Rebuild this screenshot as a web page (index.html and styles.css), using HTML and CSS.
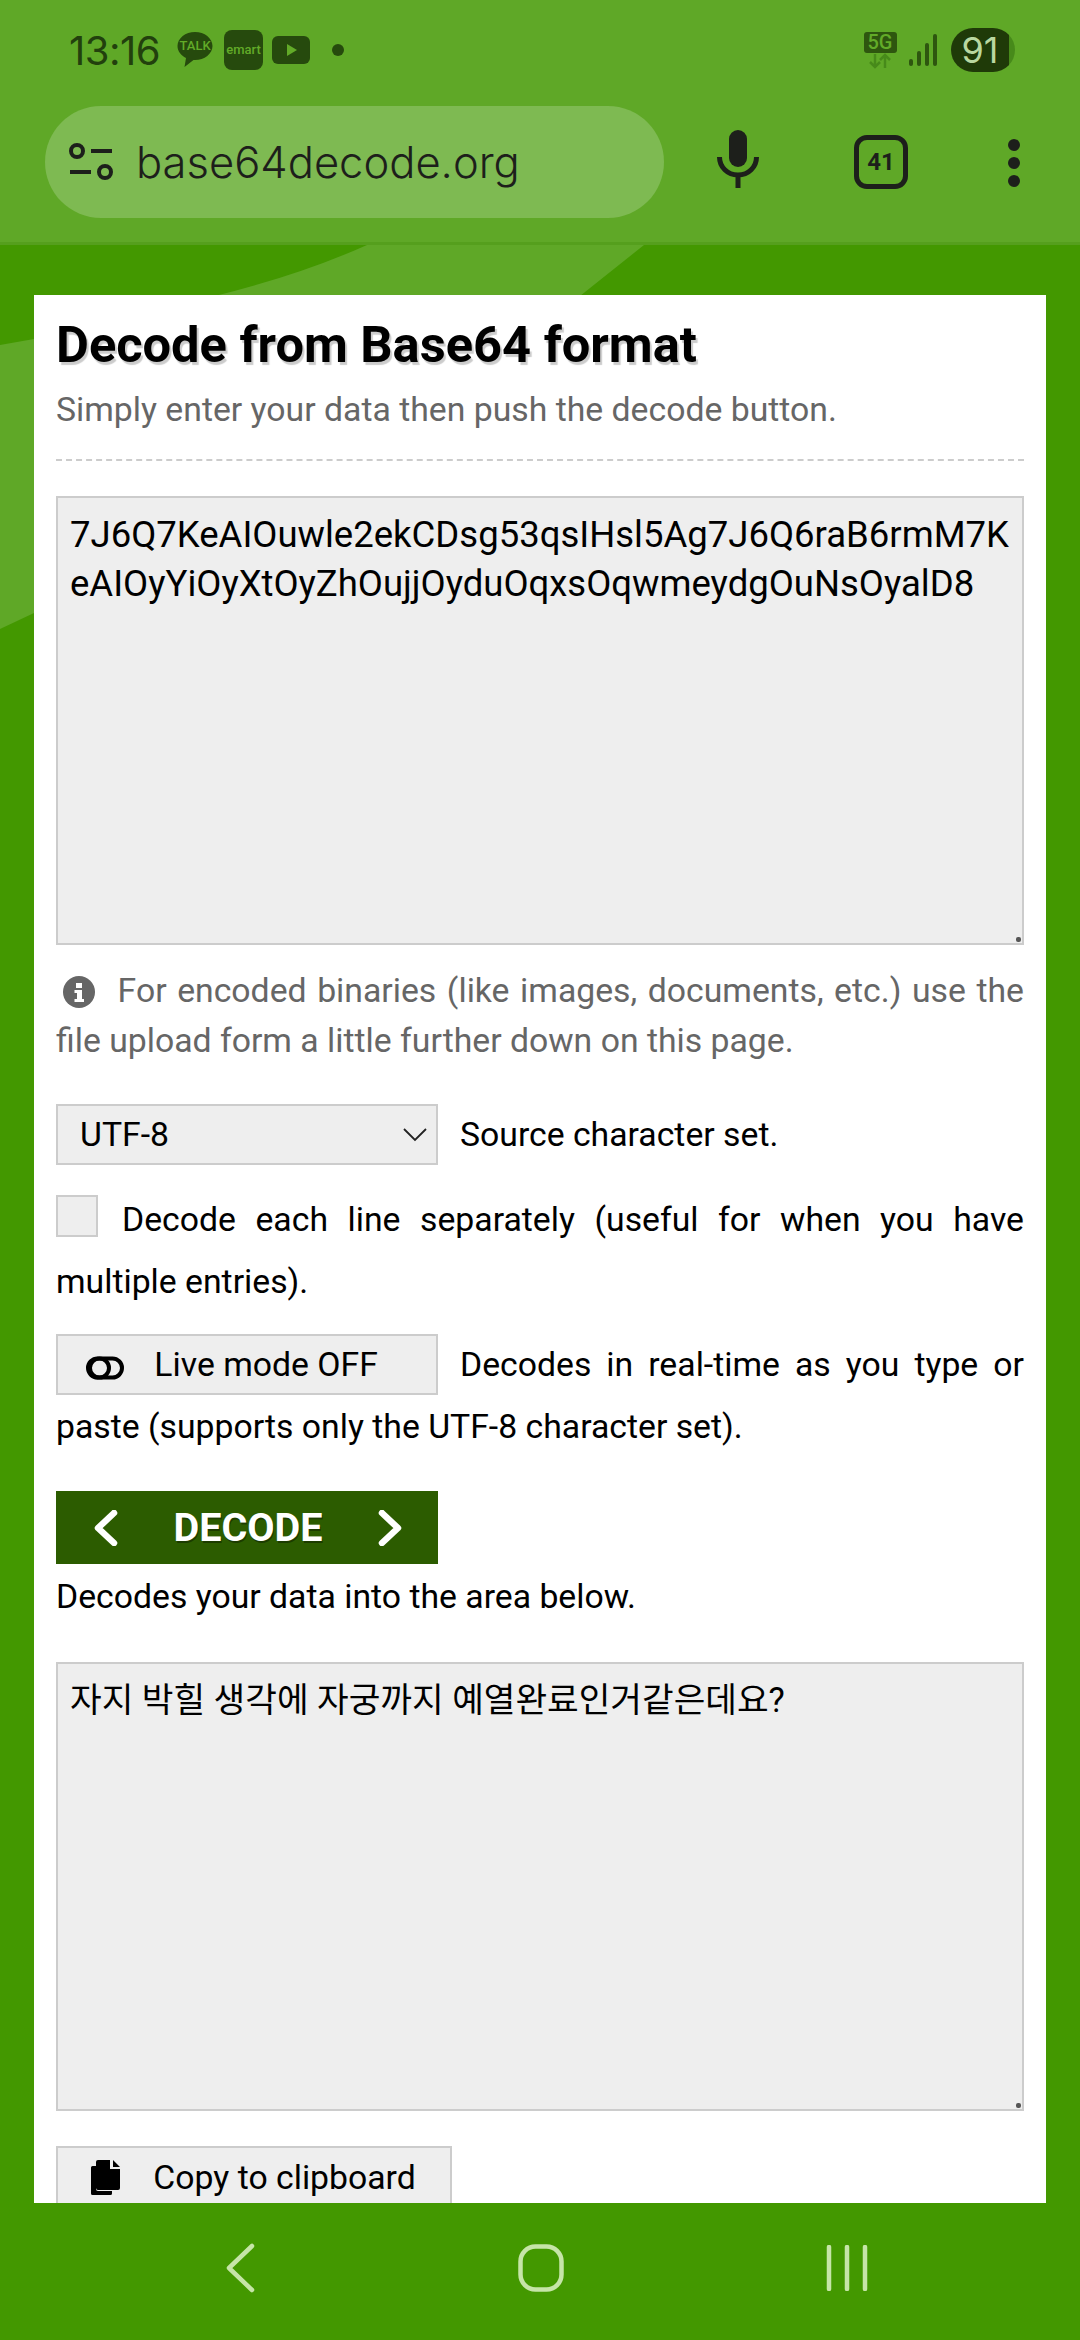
FILE: index.html
```html
<!DOCTYPE html>
<html lang="en">
  <head>
    <meta charset="UTF-8" />
    <meta name="viewport" content="width=device-width, initial-scale=1.0" />
    <title>Decode from Base64 format</title>
    <link rel="stylesheet" href="styles.css">
  </head>
  <body>
    <header class="chrome">
      <div class="status">
        <span class="clock">13:16</span>
        <span class="talk">
          <svg viewBox="0 0 36 38" width="36" height="38"><path d="M18 1C8.500 1 0.500 7.200 0.500 15c0 5.400 3.600 9.600 8.500 12l-1.500 9 9-7.100c.5 0 1 .1 1.500.1 9.500 0 17.500-6.200 17.500-14S27.500 1 18 1z" /></svg>
          <span class="talk-label">TALK</span>
        </span>
        <span class="emart">emart</span>
        <svg class="yt" viewBox="0 0 38 28" width="38" height="28"><rect width="38" height="28" rx="6" /><path class="yt-play" d="M15 8l10 6-10 6z" /></svg>
        <span class="status-dot"></span>
        <span class="status-right">
          <span class="net">
            <span class="net-label">5G</span>
            <svg viewBox="0 0 26 16" width="26" height="16"><path d="M8 1v13M3 9l5 5 5-5M18 15V2M13 7l5-5 5 5" /></svg>
          </span>
          <svg class="signal" viewBox="0 0 28 32" width="28" height="32"><rect x="0" y="25" width="4" height="7" rx="2" /><rect x="8" y="17" width="4" height="15" rx="2" /><rect x="16" y="9" width="4" height="23" rx="2" /><rect x="24" y="0" width="4" height="32" rx="2" /></svg>
          <span class="battery"><span class="battery-num">91</span></span>
        </span>
      </div>
      <div class="toolbar">
        <div class="omnibox">
          <svg class="tune" viewBox="0 0 44 38" width="44" height="38"><circle cx="8" cy="8" r="6" /><path d="M22 8h21M1 29h21" /><circle cx="36" cy="29" r="6" /></svg>
          <span class="url">base64decode.org</span>
        </div>
        <svg class="mic" viewBox="0 0 42 58" width="42" height="58"><rect x="12" y="0" width="18" height="37" rx="9" class="mic-fill" /><path d="M2.500 27c0 10 8 18 18.500 18s18.500-8 18.500-18M21 45v13" /></svg>
        <span class="tabs">41</span>
        <span class="dots"><i></i><i></i><i></i></span>
      </div>
    </header>

    <main class="page">
      <svg class="page-bg" viewBox="0 0 1080 500" preserveAspectRatio="none">
        <path d="M367 0H644L580 51H215Q300 30 367 0z" />
        <path d="M0 100L34 94V368L0 384z" />
      </svg>
      <section class="card">
        <h1>Decode from Base64 format</h1>
        <p class="lead">Simply enter your data then push the decode button.</p>
        <hr class="rule" />

        <div class="area">
          <textarea class="area-input" readonly>7J6Q7KeAIOuwle2ekCDsg53qsIHsl5Ag7J6Q6raB6rmM7K
eAIOyYiOyXtOyZhOujjOyduOqxsOqwmeydgOuNsOyalD8</textarea>
          <span class="grip"></span>
        </div>

        <p class="note">
          <svg class="info" viewBox="0 0 32 32" width="32" height="32"><circle cx="16" cy="16" r="16" /><path class="info-i" d="M13 7h6v5h-6zM11.500 14h7.500v9h2v3H11.500v-3h2.500v-6h-2.500z" /></svg>
          For encoded binaries (like images, documents, etc.) use the file upload form a little further down on this page.
        </p>

        <p class="opt opt-select">
          <select class="control">
            <option>UTF-8</option>
          </select><span>Source character set.</span>
        </p>

        <p class="opt opt-check">
          <input class="check" type="checkbox" /><span>Decode each line separately (useful for when you have multiple entries).</span>
        </p>

        <p class="opt opt-live">
          <button class="control control-btn" type="button">
            <svg viewBox="0 0 38 24" width="38" height="24"><rect x="2" y="2.500" width="34" height="19" rx="9.500" /><circle cx="13.500" cy="12" r="9.500" /></svg>
            Live mode OFF
          </button><span>Decodes in real-time as you type or paste (supports only the UTF-8 character set).</span>
        </p>

        <button class="decode" type="button">
          <svg viewBox="0 0 24 36" width="24" height="36"><path d="M20 3L4 18l16 15" /></svg>
          <span>DECODE</span>
          <svg viewBox="0 0 24 36" width="24" height="36"><path d="M4 3l16 15L4 33" /></svg>
        </button>
        <p class="after">Decodes your data into the area below.</p>

        <div class="area">
          <textarea class="area-input area-ko" readonly>자지 박힐 생각에 자궁까지 예열완료인거같은데요?</textarea>
          <span class="grip"></span>
        </div>

        <button class="control control-btn copy" type="button">
          <svg viewBox="0 0 30 36" width="30" height="36"><path class="copy-back" d="M6 6H2.500A1.500 1.500 0 0 0 1 7.500v26A1.500 1.500 0 0 0 2.500 35h18a1.500 1.500 0 0 0 1.500-1.500V31H8a2 2 0 0 1-2-2z" /><path d="M8 0h12v9h10v19a2 2 0 0 1-2 2H8a2 2 0 0 1-2-2V2a2 2 0 0 1 2-2zM23 0l7 7h-7z" /></svg>
          Copy to clipboard
        </button>
      </section>
    </main>

    <nav class="navbar">
      <svg viewBox="0 0 32 50" width="32" height="50"><path d="M28 3L5 25l23 22" /></svg>
      <svg viewBox="0 0 46 48" width="46" height="48"><rect x="2.500" y="2.500" width="41" height="43" rx="15" /></svg>
      <svg viewBox="0 0 42 46" width="42" height="46"><path d="M3 2v42M21 2v42M39 2v42" /></svg>
    </nav>
  </body>
</html>
```

FILE: styles.css
```css
*,
*::before,
*::after {
  box-sizing: border-box;
}

html,
body {
  height: 100%;
}

body {
  margin: 0;
  height: 2340px;
  display: flex;
  flex-direction: column;
  overflow: hidden;
  background-color: #439800;
  font-family: Roboto, "Noto Sans CJK KR", sans-serif;
  font-size: 33.750px;
  color: #000;
}

/* Browser + status bar */
.chrome {
  flex: none;
  height: 245px;
  background-color: #5fa827;
  border-bottom: 3px solid #559f1d;
  color: #1d1f1b;
}

.status {
  height: 100px;
  padding: 0 65px 0 69px;
  display: flex;
  align-items: center;
  color: #22400d;
}

.clock {
  font-family: Inter, Roboto, sans-serif;
  font-size: 40px;
  letter-spacing: -0.5px;
  margin-right: 17px;
}

.talk {
  position: relative;
  width: 36px;
  height: 38px;
  margin-right: 11px;
}

.talk svg {
  display: block;
  fill: #264a0d;
}

.talk-label {
  position: absolute;
  top: 7px;
  left: 0;
  width: 36px;
  text-align: center;
  font-size: 13px;
  font-weight: 500;
  line-height: 15px;
  color: #62ab28;
}

.emart {
  width: 39px;
  height: 40px;
  margin-right: 9px;
  border-radius: 8px;
  background-color: #264a0d;
  color: #62ab28;
  font-size: 13px;
  font-weight: 500;
  line-height: 40px;
  text-align: center;
}

.yt {
  fill: #264a0d;
  margin-right: 22px;
}

.yt-play {
  fill: #62ab28;
}

.status-dot {
  width: 12px;
  height: 12px;
  border-radius: 50%;
  background-color: #264a0d;
}

.status-right {
  margin-left: auto;
  display: flex;
  align-items: center;
}

.net {
  width: 34px;
  margin-right: 12px;
  display: flex;
  flex-direction: column;
  align-items: center;
}

.net-label {
  width: 33px;
  height: 21px;
  border-radius: 3px;
  background-color: #2e560f;
  color: #62ab28;
  font-size: 20px;
  font-weight: 500;
  line-height: 21px;
  text-align: center;
}

.net svg {
  fill: none;
  stroke: #478a1a;
  stroke-width: 2.500;
}

.signal {
  fill: #2e560f;
  margin-right: 14px;
}

.battery {
  width: 64px;
  height: 44px;
  border-radius: 22px;
  background: linear-gradient(90deg, #1f3a08 90%, #478a1a 90%);
  color: #b9d8a0;
  text-align: center;
}

.battery-num {
  font-family: Inter, Roboto, sans-serif;
  font-size: 36px;
  line-height: 44px;
  margin-left: -6px;
}

.toolbar {
  height: 142px;
  padding: 6px 0 0 45px;
  display: flex;
  align-items: flex-start;
}

.omnibox {
  width: 619px;
  height: 112px;
  padding-left: 24px;
  border-radius: 56px;
  background-color: #7eba52;
  display: flex;
  align-items: center;
}

.tune {
  fill: none;
  stroke: #1d1f1b;
  stroke-width: 4px;
  margin-right: 23px;
}

.url {
  font-family: Inter, Roboto, sans-serif;
  font-size: 43.500px;
  font-weight: 300;
}

.mic {
  margin: 24px 0 0 53px;
  fill: none;
  stroke: #1d1f1b;
  stroke-width: 5px;
}

.mic-fill {
  fill: #1d1f1b;
  stroke: none;
}

.tabs {
  width: 54px;
  height: 54px;
  margin: 29px 0 0 95px;
  border: 5px solid #1d1f1b;
  border-radius: 13px;
  font-size: 24px;
  font-weight: 700;
  line-height: 44px;
  text-align: center;
}

.dots {
  margin: 33px 0 0 100px;
  display: flex;
  flex-direction: column;
  gap: 6px;
}

.dots i {
  width: 12px;
  height: 12px;
  border-radius: 50%;
  background-color: #1d1f1b;
}

/* Page */
.page {
  position: relative;
  flex: 1;
  min-height: 0;
  padding: 50px 34px 0;
}

.page-bg {
  position: absolute;
  top: 0;
  left: 0;
  width: 1080px;
  height: 500px;
  fill: #5fa827;
}

.card {
  position: relative;
  height: 100%;
  padding: 0 22px;
  overflow: hidden;
  background-color: #fff;
}

h1 {
  margin: 20px 0 0;
  font-size: 50.600px;
  line-height: 60px;
  font-weight: 700;
  text-shadow: 2px 3px 1px #ccc;
}

.lead {
  margin: 15px 0 0;
  color: #666;
  line-height: 40px;
}

.rule {
  margin: 29px 0 0;
  border: 0;
  border-top: 2px dashed #ccc;
}

.area {
  position: relative;
  margin-top: 35px;
}

.area-input {
  display: block;
  width: 100%;
  height: 449px;
  padding: 12px 4px 12px 12px;
  border: 2px solid #ccc;
  border-radius: 0;
  background-color: #eee;
  color: #000;
  font: 36.500px/49px Roboto, "Noto Sans CJK KR", sans-serif;
  resize: none;
  overflow: hidden;
  outline: none;
  white-space: pre;
}

.area-ko {
  font-size: 34.400px;
}

.grip {
  position: absolute;
  right: 3px;
  bottom: 3px;
  width: 5px;
  height: 5px;
  border-radius: 2px;
  background-color: #555;
}

.note {
  margin: 21px 0 0;
  color: #666;
  line-height: 50px;
  text-align: justify;
}

.info {
  margin: 0 12px 0 7px;
  vertical-align: -6px;
  fill: #666;
}

.info-i {
  fill: #fff;
}

.opt {
  margin: 0;
  line-height: 62px;
  text-align: justify;
}

.opt-select {
  margin-top: 38px;
}

.opt-check {
  margin-top: 23px;
}

.opt-live {
  margin-top: 21px;
}

.control {
  display: inline-block;
  width: 382px;
  height: 61px;
  margin: 0 22px 0 0;
  padding: 0 22px;
  border: 2px solid #ccc;
  border-radius: 0;
  background-color: #eee;
  color: #000;
  font: 33.750px Roboto, sans-serif;
  vertical-align: top;
  outline: none;
}

select.control {
  appearance: none;
  background-image: url("data:image/svg+xml,%3Csvg xmlns='http://www.w3.org/2000/svg' width='24' height='14'%3E%3Cpath d='M1 1l11 11L23 1' fill='none' stroke='%23222' stroke-width='1.800'/%3E%3C/svg%3E");
  background-repeat: no-repeat;
  background-position: right 9px center;
}

.control-btn {
  padding: 0 0 0 28px;
  text-align: left;
  white-space: nowrap;
}

.control-btn svg {
  margin-right: 22px;
  vertical-align: -4px;
}

.control-btn rect {
  fill: none;
  stroke: #000;
  stroke-width: 4px;
}

.control-btn circle {
  fill: none;
  stroke: #000;
  stroke-width: 4px;
}

.check {
  appearance: none;
  width: 42px;
  height: 42px;
  margin: 0 24px 0 0;
  border: 2px solid #ccc;
  background-color: #eee;
  vertical-align: -6px;
}

.decode {
  width: 382px;
  height: 73px;
  margin: 33px 0 0;
  padding: 0 36px 0 38px;
  border: 0;
  background-color: #2c5c00;
  color: #fff;
  font: 700 39.600px Roboto, sans-serif;
  text-shadow: 1px 2px 0 rgba(0, 0, 0, 0.35);
  display: flex;
  align-items: center;
  justify-content: space-between;
}

.decode path {
  fill: none;
  stroke: #fff;
  stroke-width: 6.500px;
  stroke-linecap: round;
  stroke-linejoin: round;
}

.after {
  margin: 12px 0 0;
  line-height: 42px;
}

.after + .area {
  margin-top: 44px;
}

.copy {
  display: block;
  width: 396px;
  margin-top: 35px;
  height: 62px;
}

.copy svg {
  margin: 0 25px 0 4px;
  vertical-align: -7px;
  fill: #000;
}

/* Navigation bar */
.navbar {
  flex: none;
  height: 137px;
  padding: 0 212px 0 224px;
  display: flex;
  align-items: center;
  justify-content: space-between;
  background-color: #439800;
}

.navbar svg {
  fill: none;
  stroke: #c6e5a8;
  stroke-width: 4.500px;
  stroke-linecap: round;
  stroke-linejoin: round;
  margin-top: -7px;
}
```
